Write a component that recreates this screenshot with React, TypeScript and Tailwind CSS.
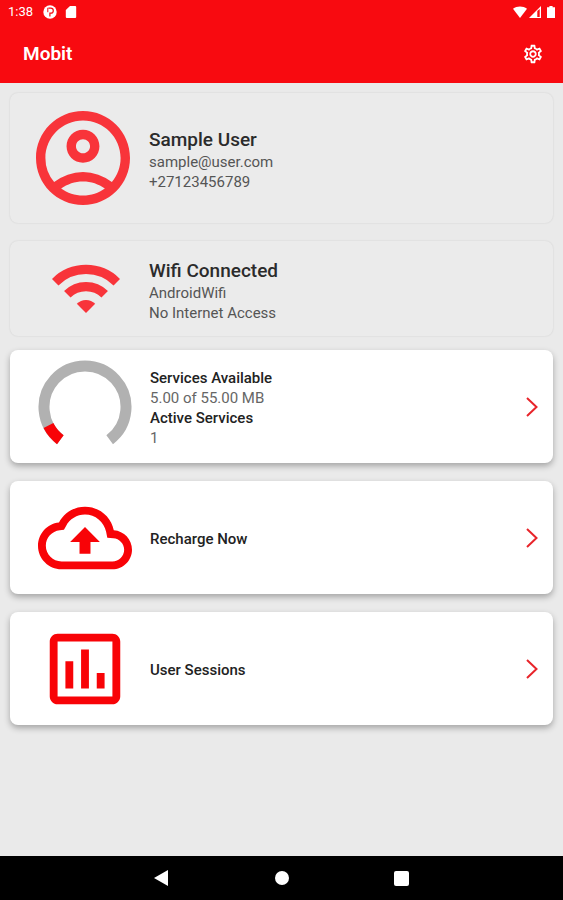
import type { ReactNode } from "react";
import { MdOutlineSettings } from "react-icons/md";

function StatusBar() {
  return (
    <div className="flex h-6 items-center justify-between px-2 text-white">
      <div className="flex items-center">
        <span className="text-[13px] leading-6">1:38</span>
        <svg viewBox="0 0 14 14" className="ml-2.5 size-3.5" aria-hidden="true">
          <circle cx="7" cy="7" r="6.7" fill="#fff" />
          <path d="M5.4 3.2h2.4a2.4 2.4 0 0 1 0 5h-.9v3.4" fill="none" stroke="#f80a10" strokeWidth="1.2" />
          <path d="M4.8 2.8v4.4" fill="none" stroke="#f80a10" strokeWidth="1" />
        </svg>
        <svg viewBox="0 0 12 14" className="ml-2 h-3.5 w-3" aria-hidden="true">
          <path d="M5 1h5.2a1 1 0 0 1 1 1v10a1 1 0 0 1-1 1H1.8a1 1 0 0 1-1-1V5z" fill="#fff" />
        </svg>
      </div>
      <div className="flex items-center" aria-hidden="true">
        <svg viewBox="0 0 14 12" className="h-3 w-3.5">
          <path d="M7 12 0 2.8C4-.3 10-.3 14 2.8z" fill="#fff" />
        </svg>
        <svg viewBox="0 0 12 12" className="ml-0.5 size-3">
          <path d="M12 0v12H0z" fill="#fff" />
          <path d="M8.3 5v6h2.4V3z" fill="#f80a10" />
        </svg>
        <svg viewBox="0 0 8 12" className="ml-1.5 h-3 w-2">
          <path d="M2.4 0h3.2v1.2H8V12H0V1.2h2.4z" fill="#fff" />
        </svg>
      </div>
    </div>
  );
}

function AccountIcon() {
  return (
    <svg viewBox="2 2 20 20" className="size-[94px]" fill="#f8343a" aria-hidden="true">
      <path d="M12 2C6.48 2 2 6.48 2 12s4.48 10 10 10 10-4.48 10-10S17.52 2 12 2zM7.35 18.5C8.66 17.56 10.26 17 12 17s3.34.56 4.65 1.5c-1.31.94-2.91 1.5-4.65 1.5s-3.34-.56-4.65-1.5zm10.79-1.38a9.947 9.947 0 0 0-12.28 0A7.957 7.957 0 0 1 4 12c0-4.42 3.58-8 8-8s8 3.58 8 8c0 1.95-.7 3.73-1.86 5.12z" />
      <path d="M12 6c-1.93 0-3.5 1.57-3.5 3.5S10.07 13 12 13s3.5-1.57 3.5-3.5S13.93 6 12 6zm0 5c-.83 0-1.5-.67-1.5-1.5S11.17 8 12 8s1.5.67 1.5 1.5S12.83 11 12 11z" />
    </svg>
  );
}

function WifiIcon() {
  return (
    <svg viewBox="-34 -49 68 49" className="h-[49px] w-[68px]" fill="none" stroke="#f8343a" strokeWidth="9.2" aria-hidden="true">
      <path d="M-30.8-30.8a43.6 43.6 0 0 1 61.6 0" />
      <path d="M-18.7-18.7a26.5 26.5 0 0 1 37.4 0" />
      <path d="M0 0-9.2-9.2a13 13 0 0 1 18.4 0z" fill="#f8343a" stroke="none" />
    </svg>
  );
}

function UsageGauge({ used, total }: { used: number; total: number }) {
  const radius = 41;
  const point = (degrees: number) => {
    const a = (degrees * Math.PI) / 180;
    return `${-radius * Math.sin(a)} ${radius * Math.cos(a)}`;
  };
  const start = 37;
  const end = 323;
  const split = start + ((end - start) * used) / total;
  return (
    <svg viewBox="-47 -47 94 94" className="size-[94px]" fill="none" strokeWidth="11" aria-hidden="true">
      <path d={`M${point(start)}A${radius} ${radius} 0 1 1 ${point(end)}`} stroke="#b1b1b1" />
      <path d={`M${point(start)}A${radius} ${radius} 0 0 1 ${point(split)}`} stroke="#f80307" />
    </svg>
  );
}

function CloudUploadIcon() {
  return (
    <svg viewBox="0 0 24 24" className="size-[94px]" fill="#f80307" aria-hidden="true">
      <path d="M19.35 10.04C18.67 6.59 15.64 4 12 4 9.11 4 6.6 5.64 5.35 8.04 2.34 8.36 0 10.91 0 14c0 3.31 2.69 6 6 6h13c2.76 0 5-2.24 5-5 0-2.64-2.05-4.78-4.65-4.96zM19 18H6c-2.21 0-4-1.79-4-4 0-2.05 1.53-3.76 3.56-3.97l1.07-.11.5-.95C8.08 7.14 9.94 6 12 6c2.62 0 4.88 1.86 5.39 4.43l.3 1.5 1.53.11c1.56.1 2.78 1.41 2.78 2.96 0 1.65-1.35 3-3 3z" />
      <path d="M8.2 13h2.4v3h2.8v-3h2.4L12 9.2z" />
    </svg>
  );
}

function ChartIcon() {
  return (
    <svg viewBox="0 0 24 24" className="size-[94px]" fill="#f80307" aria-hidden="true">
      <path d="M19 3H5c-1.1 0-2 .9-2 2v14c0 1.1.9 2 2 2h14c1.1 0 2-.9 2-2V5c0-1.1-.9-2-2-2zm0 16H5V5h14v14z" />
      <path d="M7 10h2v7H7zm4-3h2v10h-2zm4 6h2v4h-2z" />
    </svg>
  );
}

function InfoCard({
  icon,
  title,
  lines,
  className,
}: {
  icon: ReactNode;
  title: string;
  lines: string[];
  className: string;
}) {
  return (
    <section className={`flex items-center rounded-lg bg-[#ebebeb] shadow-[0_0_2px_rgba(0,0,0,0.12)] ${className}`}>
      {icon}
      <div className="min-w-0 pt-1 text-[15px] leading-5 text-[#555]">
        <h2 className="text-[19px] font-medium leading-6 text-[#2b2b2b]">{title}</h2>
        {lines.map((line) => (
          <p key={line}>{line}</p>
        ))}
      </div>
    </section>
  );
}

function ActionCard({ icon, children }: { icon: ReactNode; children: ReactNode }) {
  return (
    <button
      type="button"
      className="flex h-[113px] w-full items-center rounded-lg bg-white pl-7 pr-[15px] text-left text-[15px] leading-5 text-[#666] shadow-[0_3px_6px_rgba(0,0,0,0.3)]"
    >
      {icon}
      <span className="ml-[18px] flex min-w-0 flex-1 flex-col pt-0.5">{children}</span>
      <svg viewBox="0 0 12 20" className="h-5 w-3 shrink-0" fill="none" stroke="#e8242a" strokeWidth="2" aria-hidden="true">
        <path d="m1 1 9.5 9L1 19" />
      </svg>
    </button>
  );
}

function NavigationBar() {
  return (
    <nav className="flex h-11 items-center justify-center gap-[88px] bg-black">
      <button type="button" aria-label="Back" className="flex size-8 items-center justify-center">
        <svg viewBox="0 0 16 16" className="size-4" fill="#fff">
          <path d="M14 0v16L0 8z" />
        </svg>
      </button>
      <button type="button" aria-label="Home" className="flex size-8 items-center justify-center">
        <span className="size-3.5 rounded-full bg-white" />
      </button>
      <button type="button" aria-label="Recent apps" className="flex size-8 items-center justify-center">
        <span className="size-[15px] rounded-xs bg-white" />
      </button>
    </nav>
  );
}

export default function App() {
  return (
    <div className="flex min-h-screen flex-col bg-[#eaeaea] font-[Roboto,sans-serif]">
      <header className="bg-[#f80a10] text-white">
        <StatusBar />
        <div className="flex h-[59px] items-center justify-between pl-[23px] pr-[19px]">
          <h1 className="pt-0.5 text-[19px] font-semibold">Mobit</h1>
          <button type="button" aria-label="Settings">
            <MdOutlineSettings className="size-[22px]" />
          </button>
        </div>
      </header>
      <main className="flex flex-1 flex-col px-2.5 pt-2.5">
        <InfoCard
          icon={<AccountIcon />}
          title="Sample User"
          lines={["sample@user.com", "+27123456789"]}
          className="h-[130px] gap-[19px] pl-[26px]"
        />
        <InfoCard
          icon={<WifiIcon />}
          title="Wifi Connected"
          lines={["AndroidWifi", "No Internet Access"]}
          className="mb-3.5 mt-[18px] h-[95px] gap-[29px] pl-[42px]"
        />
        <div className="flex flex-col gap-[18px]">
          <ActionCard icon={<UsageGauge used={5} total={55} />}>
            <span className="font-medium text-[#222]">Services Available</span>
            <span>5.00 of 55.00 MB</span>
            <span className="font-medium text-[#222]">Active Services</span>
            <span>1</span>
          </ActionCard>
          <ActionCard icon={<CloudUploadIcon />}>
            <span className="font-medium text-[#222]">Recharge Now</span>
          </ActionCard>
          <ActionCard icon={<ChartIcon />}>
            <span className="font-medium text-[#222]">User Sessions</span>
          </ActionCard>
        </div>
      </main>
      <NavigationBar />
    </div>
  );
}
